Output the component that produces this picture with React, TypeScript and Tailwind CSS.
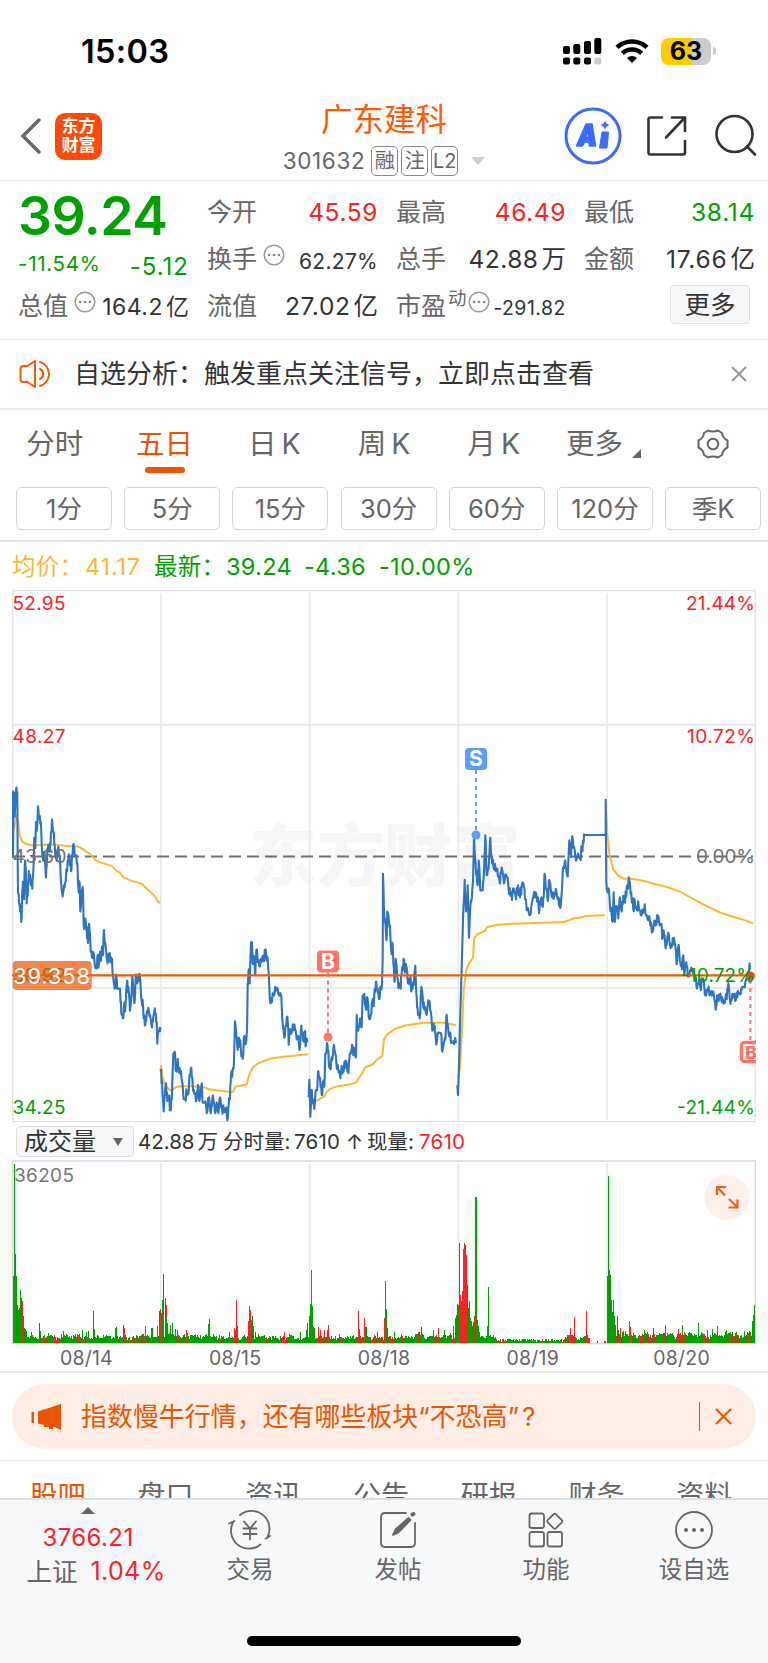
import { ReactNode } from 'react'

const PRICE_COLOR = '#2f74c0'
const AVG_COLOR = '#ffb733'
const UP = '#fa2323'
const DOWN = '#00a000'

// Traces are stored as sampled "x,y" pairs; toX / toY bring them to chart pixels
type Trace = { x0: number; price: string; avg: string }

const TRACES: Trace[] = [
  {
    x0: 0,
    price:
      '38,600 39,790 41,605 44,675 46,640 48,598 52,605 53,800 54,890 57,920 60,945 62,930 64,975 67,885 70,865 72,910 75,800 78,850 80,922 83,900 86,830 90,840 97,880 100,830 103,735 106,765 108,690 110,715 114,645 118,680 122,690 125,755 128,790 133,775 138,848 141,790 145,755 149,775 153,720 156,683 160,720 164,755 170,800 175,760 180,790 183,860 188,902 192,870 197,860 203,800 208,785 213,830 216,785 219,758 224,785 229,785 233,830 236,890 239,865 241,945 244,910 248,875 252,995 256,965 260,990 264,1035 267,980 270,1010 272,1060 276,1075 280,1065 284,1095 289,1108 292,1075 296,1100 300,1060 303,1085 306,1045 309,1070 312,998 316,1035 320,1080 324,1088 328,1070 332,1075 336,1080 339,1125 344,1165 349,1125 353,1165 360,1165 364,1235 369,1250 373,1205 376,1220 380,1155 385,1160 390,1228 395,1175 397,1130 401,1180 404,1200 408,1125 412,1150 415,1125 420,1130 425,1200 429,1215 431,1250 436,1268 440,1235 445,1220 450,1240 456,1275 460,1245 466,1235 470,1260 472,1322 475,1285 478,1285 481,1275',
    avg: '39,720 44,700 50,670 55,695 60,730 66,745 78,752 100,757 130,755 170,755 200,758 235,760 250,768 260,775 275,785 285,798 300,805 335,815 348,828 360,835 370,848 395,858 425,866 435,875 450,888 465,902 475,918 481,920',
  },
  {
    x0: 0,
    price:
      '482,1400 486,1430 491,1515 495,1465 498,1435 502,1485 506,1470 511,1510 515,1480 518,1400 520,1350 524,1345 528,1400 533,1365 537,1405 543,1400 546,1430 551,1480 556,1480 560,1460 565,1465 569,1410 574,1390 578,1440 583,1465 590,1480 594,1440 598,1485 603,1450 605,1435 608,1490 614,1490 620,1520 627,1475 632,1520 637,1480 642,1490 646,1520 650,1490 655,1520 660,1475 665,1500 672,1515 678,1505 682,1540 686,1500 690,1480 693,1410 698,1400 702,1370 705,1258 709,1300 713,1340 717,1305 722,1330 728,1365 733,1300 738,1320 741,1290 743,1150 746,1110 749,1150 752,1060 755,1032 759,1095 763,1085 766,1125 769,1055 773,1090 778,1100 783,1080 790,1085 796,1060 800,1085 803,1080 806,1120 809,1190 814,1205 820,1185 828,1170 835,1180 843,1185 846,1230 849,1275 853,1305 857,1270 862,1245 866,1325 870,1280 875,1290 880,1275 885,1280 890,1310 895,1300 899,1340 904,1270 908,1290 911,1310 914,1290 918,1325 922,1318',
    avg: '481,1400 484,1385 487,1415 495,1440 510,1455 520,1452 530,1445 570,1443 615,1447 625,1452 680,1458 688,1460 700,1458 706,1445 740,1438 748,1410 758,1390 775,1378 810,1365 850,1359 925,1352',
  },
  {
    x0: 900,
    price:
      '26,1475 28,1425 31,1530 34,1460 38,1480 43,1508 47,1455 51,1455 55,1400 60,1420 65,1468 70,1430 73,1445 76,1350 81,1320 85,1340 88,1385 92,1395 96,1370 100,1335 105,1345 109,1375 114,1392 119,1400 121,1420 125,1385 131,1400 136,1370 142,1400 146,1395 149,1350 153,1350 156,1325 160,1355 164,1340 168,1358 170,1240 175,1285 180,1250 185,1275 188,1185 193,1180 198,1225 202,1190 206,1245 212,1240 217,1200 221,1215 225,1165 229,1145 233,1165 237,1195 241,1160 246,1155 248,1080 249,838 253,960 257,990 260,1020 262,945 266,965 270,985 274,1060 278,1040 281,1100 284,1145 287,1080 292,1130 297,1160 302,1165 306,1105 311,1080 316,1115 320,1105 324,1150 330,1135 335,1165 341,1155 346,1100 350,1190 354,1240 359,1250 364,1160 368,1190 373,1225 380,1240 387,1200 392,1230 397,1285 401,1265 405,1290 409,1325 414,1290 423,1292 427,1345 431,1320 436,1310 440,1240 444,1275 450,1290 454,1320 460,1315 468,1320',
    avg: '28,1480 35,1495 50,1485 62,1478 73,1473 80,1460 90,1451 110,1444 150,1438 170,1432 176,1420 186,1408 195,1390 220,1380 230,1368 247,1357 252,1310 262,1295 285,1280 315,1270 370,1262 430,1262 468,1269',
  },
  {
    x0: 900,
    price:
      '472,1440 474,1468 480,1270 488,1000 494,855 498,945 503,870 507,1020 512,915 516,905 519,860 522,735 527,810 531,860 533,870 536,800 541,885 548,885 552,830 556,728 559,820 562,840 567,800 571,735 575,790 580,815 587,830 594,845 600,865 605,820 612,865 618,840 625,870 631,900 636,912 641,880 648,910 654,870 660,905 665,870 672,875 676,910 682,935 688,955 694,930 700,905 707,890 713,905 717,950 722,915 727,930 731,900 734,838 738,880 743,915 748,855 752,880 757,900 762,905 768,880 775,905 781,935 786,880 790,820 794,805 799,825 803,845 808,742 813,790 817,730 822,760 828,800 834,780 840,795 846,760 850,750 853,727 917,727',
    avg: '474,1420 480,1390 486,1280 491,1170 498,1115 506,1095 519,1077 523,1020 532,1010 556,1000 560,990 590,983 640,980 790,975 806,970 820,965 850,961 855,958 915,956',
  },
  {
    x0: 1680,
    price:
      '137,727 137,627 139,860 143,890 146,880 150,935 154,940 158,970 161,890 164,975 170,930 175,965 180,905 185,945 190,900 195,920 200,875 204,880 208,855 212,895 217,910 220,940 224,915 230,940 236,930 242,955 248,950 254,925 260,955 266,965 271,985 276,1005 281,980 287,985 292,955 297,975 303,985 308,1020 312,1010 317,1050 321,1030 325,1005 330,1040 336,1045 342,1020 347,1055 350,1095 356,1040 361,1090 366,1110 370,1070 373,1125 379,1090 383,1130 388,1130 394,1105 400,1125 406,1140 411,1165 417,1140 421,1160 427,1145 433,1160 438,1185 444,1170 450,1180 456,1185 462,1190 467,1225 471,1185 476,1200 481,1180 487,1190 492,1200 500,1195 505,1150 509,1190 515,1198 521,1190 526,1200 532,1190 535,1175 542,1180 547,1160 552,1160 558,1140 565,1120 570,1105',
    avg: '137,640 142,720 148,780 160,825 175,843 190,851 230,854 260,860 280,866 310,872 360,888 400,910 440,930 480,948 520,960 560,972 580,980',
  },
]

const toX = (v: number) => v / 3 - 12
const toY = (v: number) => v / 2.851 - 10

function noise(i: number) {
  const s = Math.sin(i * 12.9898) * 43758.5453
  return s - Math.floor(s)
}

function tracePath(src: string, x0: number, jitter = 0) {
  const pts = src.split(' ').map((p) => p.split(',').map(Number))
  const out: string[] = []
  pts.forEach(([x, y], i) => {
    out.push(`${toX(x + x0).toFixed(1)},${toY(y).toFixed(1)}`)
    const next = pts[i + 1]
    if (!jitter || !next || next[1] === y || next[0] - x < 3) return
    // tick noise between two samples
    for (const t of [0.35, 0.7]) {
      const n = (noise(x + x0 + t * 10) - 0.5) * jitter
      out.push(`${toX(x + x0 + (next[0] - x) * t).toFixed(1)},${toY(y + (next[1] - y) * t + n).toFixed(1)}`)
    }
  })
  return 'M' + out.join(' L')
}

// [x, height, r = up / g = down]
const SPIKES: [number, number, string][] = [
  [41, 200, 'r'], [43, 537, 'g'], [46, 267, 'r'], [48, 200, 'g'], [51, 115, 'g'], [54, 100, 'g'], [57, 105, 'g'], [60, 158, 'g'], [63, 135, 'g'], [67, 127, 'r'], [69, 80, 'g'], [72, 45, 'g'], [75, 42, 'g'], [78, 36, 'g'],
  [95, 32, 'r'], [117, 60, 'g'], [120, 36, 'g'], [189, 35, 'g'], [246, 40, 'g'], [258, 34, 'g'], [264, 36, 'g'], [279, 97, 'g'], [282, 42, 'g'], [345, 45, 'g'], [350, 48, 'g'], [370, 55, 'g'], [374, 44, 'r'], [435, 52, 'g'], [453, 45, 'g'], [458, 44, 'g'], [471, 50, 'r'], [477, 95, 'g'], [480, 103, 'r'], [483, 90, 'r'],
  [486, 130, 'g'], [489, 207, 'g'], [491, 188, 'g'], [495, 135, 'g'], [498, 115, 'r'], [500, 75, 'g'], [503, 60, 'g'], [512, 55, 'g'], [516, 60, 'g'], [525, 43, 'g'], [532, 40, 'g'], [558, 40, 'r'], [562, 30, 'r'], [625, 58, 'g'], [627, 73, 'r'], [687, 32, 'g'], [703, 45, 'r'], [707, 40, 'r'], [710, 130, 'r'], [713, 50, 'g'], [746, 65, 'r'], [749, 112, 'r'], [752, 100, 'r'], [755, 68, 'g'], [758, 80, 'g'], [761, 50, 'g'], [765, 32, 'g'],
  [854, 32, 'r'], [902, 34, 'g'], [919, 40, 'g'], [923, 60, 'g'], [927, 82, 'r'], [931, 118, 'g'], [934, 220, 'r'], [937, 112, 'g'], [940, 48, 'g'], [943, 44, 'g'], [956, 48, 'r'], [961, 40, 'r'], [973, 40, 'r'], [981, 38, 'g'], [986, 55, 'r'], [1018, 28, 'g'], [1076, 95, 'r'], [1078, 42, 'g'], [1094, 74, 'r'], [1097, 47, 'g'], [1100, 47, 'g'], [1131, 34, 'r'], [1153, 75, 'r'], [1155, 187, 'r'], [1158, 102, 'g'], [1161, 46, 'g'],
  [1184, 34, 'g'], [1204, 28, 'g'], [1256, 34, 'r'], [1259, 34, 'g'], [1263, 48, 'g'], [1301, 38, 'g'], [1314, 46, 'r'], [1332, 38, 'g'], [1352, 30, 'g'], [1360, 50, 'r'], [1366, 75, 'g'], [1370, 85, 'g'], [1373, 118, 'g'], [1376, 115, 'g'],
  [1379, 300, 'g'], [1382, 143, 'r'], [1385, 125, 'r'], [1387, 155, 'r'], [1390, 282, 'r'], [1392, 300, 'r'], [1395, 293, 'r'], [1398, 265, 'r'], [1401, 175, 'g'], [1403, 145, 'g'], [1406, 105, 'g'], [1408, 125, 'r'], [1411, 75, 'g'], [1415, 66, 'g'], [1418, 50, 'g'], [1421, 64, 'g'], [1424, 80, 'r'], [1426, 437, 'g'], [1429, 437, 'g'], [1432, 68, 'g'], [1435, 50, 'g'], [1438, 34, 'g'], [1462, 50, 'r'], [1464, 167, 'g'], [1480, 22, 'g'],
  [1697, 18, 'g'], [1701, 25, 'g'], [1711, 46, 'r'], [1714, 24, 'g'], [1722, 78, 'r'], [1758, 97, 'r'],
  [1822, 200, 'r'], [1824, 500, 'g'], [1827, 220, 'g'], [1830, 203, 'g'], [1832, 130, 'g'], [1835, 128, 'r'], [1837, 92, 'g'], [1840, 128, 'g'], [1843, 80, 'g'], [1846, 55, 'g'], [1851, 82, 'g'], [1854, 40, 'g'], [1862, 44, 'r'], [1866, 34, 'g'], [1870, 36, 'g'], [1876, 35, 'r'], [1887, 66, 'r'], [1891, 48, 'r'], [1934, 38, 'g'], [1960, 46, 'g'], [1996, 55, 'g'], [2016, 28, 'g'], [2034, 42, 'r'], [2047, 55, 'g'], [2068, 32, 'g'], [2096, 60, 'g'], [2122, 40, 'g'], [2136, 42, 'g'], [2152, 52, 'g'], [2179, 40, 'g'], [2208, 32, 'g'], [2234, 35, 'g'], [2247, 36, 'r'], [2256, 65, 'g'], [2260, 83, 'g'], [2263, 113, 'g'],
]

function VolumeBars() {
  const bars: ReactNode[] = []
  for (let x = 40; x < 2264; x += 2.6) {
    let h = 7 + noise(x) * 12 + noise(Math.floor(x / 14)) * 10
    let up = noise(x * 3) > 0.84
    if (x > 1486 && x < 1690) h = 4 + noise(x) * 9
    if (x > 1770 && x < 1820) {
      up = true
      h = noise(x) > 0.8 ? 7 : 1.5
    }
    if (x > 1840) h += 5
    bars.push(<rect key={x} x={toX(x - 1.5)} y={183 - h / 3} width={1} height={h / 3} fill={up ? UP : DOWN} />)
  }
  return (
    <g shapeRendering="crispEdges">
      {bars}
      {SPIKES.map(([x, h, c], i) => (
        <rect key={`s${i}`} x={toX(x - 1.5)} y={183 - h / 3} width={1} height={h / 3} fill={c === 'r' ? UP : DOWN} />
      ))}
    </g>
  )
}

function Marker({ x, y, dotY, label, color }: { x: number; y: number; dotY: number; label: string; color: string }) {
  const start = dotY > y ? y + 11 : y - 11
  return (
    <g>
      <path d={`M${x} ${start}V${dotY}`} stroke={color} strokeWidth="2" strokeDasharray="4 4" />
      <circle cx={x} cy={dotY} r="4.5" fill={color} />
      <rect x={x - 11} y={y - 11} width="22" height="22" rx="4" fill={color} />
      <text x={x} y={y + 7.3} textAnchor="middle" fontSize="21" fontWeight="700" fill="#fff">{label}</text>
    </g>
  )
}

const DAY_LINES = [148.8, 297.6, 446.4, 595]

function PriceChart() {
  return (
    <svg width="744" height="533" viewBox="0 0 744 533" className="block overflow-hidden">
      <text x="237" y="291" fontSize="68" fontWeight="900" fill="#f6f6f6" textLength="271">东方财富</text>
      <g stroke="#e6e9f0" strokeWidth="2" fill="none">
        {DAY_LINES.map((x) => <path key={x} d={`M${x} 3V530`} strokeWidth="1.6" />)}
        <path d="M1 134.8H743M1 398H743" />
        <path d="M0.7 0.7H743.3V531.5H0.7Z" strokeWidth="1.2" stroke="#dfe1e6" />
      </g>
      <path d="M1 266.4H741" stroke="#707070" strokeWidth="2" strokeDasharray="12 6" />
      <g fill="none" strokeWidth="2" strokeLinejoin="round">
        {TRACES.map((t, i) => <path key={i} d={tracePath(t.avg, t.x0)} stroke={AVG_COLOR} />)}
        {TRACES.map((t, i) => <path key={i} d={tracePath(t.price, t.x0, 34)} stroke={PRICE_COLOR} strokeWidth="2.1" />)}
      </g>
      <path d="M1 385.3H741" stroke="#f05a0a" strokeWidth="2.2" />
      <Marker x={316} y={371.5} dotY={447} label="B" color="#fd7567" />
      <Marker x={464} y={169} dotY={245} label="S" color="#5b9dff" />
      <g>
        <path d="M738.4 450V388" stroke="#fd7567" strokeWidth="2" strokeDasharray="4 4" />
        <circle cx="738.4" cy="386" r="4.5" fill="#e8472a" />
        <rect x="729.5" y="452.5" width="20" height="19" rx="3" fill="#fff" stroke="#fd7567" strokeWidth="3.5" />
        <text x="733" y="468.5" fontSize="18" fontWeight="800" fill="#fd7567">B</text>
      </g>
      <g fontSize="19">
        <text x="0.5" y="20" fill={UP} textLength="53">52.95</text>
        <text x="0.5" y="152.5" fill={UP} textLength="53">48.27</text>
        <text x="0.5" y="273" fill="#707070" textLength="54">43.60</text>
        <text x="0.5" y="524" fill={DOWN} textLength="53">34.25</text>
        <text x="743" y="20" fill={UP} textAnchor="end" textLength="69">21.44%</text>
        <text x="743" y="152.5" fill={UP} textAnchor="end" textLength="68">10.72%</text>
        <text x="743" y="273" fill="#707070" textAnchor="end" textLength="59">0.00%</text>
        <text x="743" y="392" fill={DOWN} textAnchor="end" textLength="75">-10.72%</text>
        <text x="743" y="524" fill={DOWN} textAnchor="end" textLength="78">-21.44%</text>
        <rect x="0.7" y="371" width="79" height="29" rx="4" fill="#f0864d" />
        <text x="0.5" y="392" fill="#a86a10" textLength="53">38.92</text>
        <path d="M0 385.3H80" stroke="#f0600f" strokeWidth="2" />
        <text x="1" y="394" fill="#fff" fontSize="22" textLength="77">39.358</text>
      </g>
    </svg>
  )
}

function VolumeChart() {
  return (
    <svg width="744" height="185" viewBox="0 0 744 185" className="block">
      <g stroke="#e6e9f0" strokeWidth="1.6" fill="none">
        {DAY_LINES.map((x) => <path key={x} d={`M${x} 3V183`} />)}
        <path d="M0.7 1H743.3V183.5H0.7Z" stroke="#d5d8de" strokeWidth="1.3" />
      </g>
      <VolumeBars />
      <text x="2" y="22" fontSize="19" fill="#777" textLength="60">36205</text>
      <circle cx="715" cy="37.5" r="22.5" fill="#fdf0ea" />
      <path d="M705 35V27H714M705.5 27.5L713 35.5M725.5 39.5V47.5H716.500M725 47L717 39" fill="none" stroke="#ee5f14" strokeWidth="2.2" />
    </svg>
  )
}

function StatusBar() {
  return (
    <div className="flex h-[95px] items-center justify-between pt-[7px] pr-[52px] pl-[81px]">
      <span className="pt-[2px] text-[32.5px] leading-none font-semibold tracking-[0.3px] text-black">15:03</span>
      <div className="flex items-center gap-[14px]">
        <svg width="40" height="28" viewBox="0 0 40 28">
          <g fill="#000">
            <rect x="1" y="9" width="7" height="8" rx="2" />
            <rect x="11.3" y="7" width="7" height="10" rx="2" />
            <rect x="22" y="4" width="7" height="13" rx="2" />
            <rect x="32.3" y="1" width="7" height="16" rx="2" />
            <rect x="1" y="20.5" width="7" height="7" rx="2" />
            <rect x="11.3" y="20.5" width="7" height="7" rx="2" />
            <rect x="22" y="20.5" width="7" height="7" rx="2" />
            <rect x="32.3" y="20.5" width="7" height="7" rx="2" fill="#ccc" />
          </g>
        </svg>
        <svg width="34" height="26" viewBox="0 0 34 26" className="-ml-px">
          <g fill="none" stroke="#000" strokeWidth="4.6">
            <path d="M2 9.4A22 22 0 0 1 32 9.4" />
            <path d="M7.3 15.4A14 14 0 0 1 26.7 15.4" />
          </g>
          <path d="M17 25L12 20A7.4 7.4 0 0 1 22 20Z" fill="#000" />
        </svg>
        <div className="-ml-0.5 flex items-center gap-[2px]">
          <div className="flex h-[27px] w-[50px] items-center justify-center rounded-[8px] bg-[linear-gradient(90deg,#ffcc00_63%,#cccccc_63%)] text-[25px] leading-none font-bold text-black">63</div>
          <div className="h-[8px] w-[3px] rounded-r-full bg-[#ccc]" />
        </div>
      </div>
    </div>
  )
}

function Tag({ children }: { children: ReactNode }) {
  return (
    <span className="flex h-[30px] w-[27px] items-center justify-center rounded-[5px] border-[1.5px] border-[#888] text-[20px] leading-none">{children}</span>
  )
}

function Header() {
  return (
    <header className="flex h-[86px] border-b border-[#ebebeb]">
      <div className="flex w-[240px] items-center gap-[14px] pb-[3px] pl-[20px]">
        <svg width="21" height="36" viewBox="0 0 21 36" fill="none" stroke="#666" strokeWidth="3.4" strokeLinecap="round">
          <path d="M19 2L3 18L19 34" />
        </svg>
        <div className="grid h-[47px] w-[47px] content-center justify-center rounded-[10px] bg-[#ff4a0a] text-[17px] leading-[19.5px] font-bold text-white">
          <span>东方</span>
          <span>财富</span>
        </div>
      </div>
      <div className="flex w-[288px] flex-col items-center">
        <h1 className="mt-[9px] text-[31.5px] leading-[32px] text-[#ff5a00]">广东建科</h1>
        <div className="mt-[10px] flex items-center gap-[3px] text-[#666]">
          <span className="mr-[3px] text-[22.5px] leading-none tracking-[0.6px]">301632</span>
          <Tag>融</Tag>
          <Tag>注</Tag>
          <Tag>L2</Tag>
          <svg width="14" height="8" viewBox="0 0 14 8" className="ml-[10px]"><path d="M0 0H14L7 8Z" fill="#ccc" /></svg>
        </div>
      </div>
      <div className="flex flex-1 items-center pb-[4px] pl-[36px]">
        <svg width="58" height="58" viewBox="0 0 58 58">
          <circle cx="29" cy="29" r="27" fill="none" stroke="#3b6cff" strokeWidth="3" />
          <path d="M22 17H28L31.5 39H25.5L25 35H20.5L18.5 39H12.5ZM24 23L21.5 30.5H24.7Z" fill="#3b6cff" stroke="#3b6cff" strokeWidth="1.6" strokeLinejoin="round" fillRule="evenodd" />
          <path d="M38 25H44.5L43 41H35.5Z" fill="#3b6cff" stroke="#3b6cff" strokeWidth="1" strokeLinejoin="round" />
          <path d="M41 13.5Q42 17 45.5 18Q42 19 41 22.5Q40 19 36.5 18Q40 17 41 13.5Z" fill="#3b6cff" />
        </svg>
        <svg width="42" height="42" viewBox="0 0 42 42" className="ml-[24px]" fill="none" stroke="#333" strokeWidth="2.6" strokeLinecap="round" strokeLinejoin="round">
          <path d="M16 2.5H4.5Q2.5 2.5 2.5 4.5V37.5Q2.5 39.5 4.5 39.5H37Q39 39.5 39 37.5V26" />
          <path d="M26 2.5H39V16M39 2.5L20 22.5" />
        </svg>
        <svg width="44" height="44" viewBox="0 0 44 44" className="ml-[26px]" fill="none" stroke="#333" strokeWidth="2.6" strokeLinecap="round">
          <circle cx="20.5" cy="20" r="18" />
          <path d="M33 32.5L41 40.5" />
        </svg>
      </div>
    </header>
  )
}

function InfoDot() {
  return (
    <svg width="22" height="22" viewBox="0 0 22 22">
      <circle cx="11" cy="11" r="9.8" fill="none" stroke="#999" strokeWidth="1.5" />
      <g fill="#888">
        <circle cx="6" cy="11" r="1.3" />
        <circle cx="11" cy="11" r="1.3" />
        <circle cx="16" cy="11" r="1.3" />
      </g>
    </svg>
  )
}

function Cell({ label, children }: { label: ReactNode; children: ReactNode }) {
  return (
    <div className="flex h-[47px] items-center justify-between leading-none whitespace-nowrap">
      <span className="flex items-center text-[25px]">{label}</span>
      {children}
    </div>
  )
}

function Unit({ children }: { children: ReactNode }) {
  return <span className="ml-[3px] tracking-normal">{children}</span>
}

function Quote() {
  return (
    <section className="grid h-[159px] grid-cols-[171px_171px_170px_171px] gap-x-[18px] border-b border-[#e8e8e8] pt-[8px] pl-[18px] text-[24.5px] text-[#666]">
      <div>
        <div className="h-[51px] text-[53.5px] leading-[54px] font-semibold tracking-[-0.5px] text-[#00a000]">39.24</div>
        <div className="flex h-[43px] items-center justify-between pt-[6px] leading-none text-[#00a000]">
          <span className="text-[20.5px] tracking-[0.7px]">-11.54%</span>
          <span className="pt-1 text-[24px] tracking-[1px]">-5.12</span>
        </div>
        <Cell label={<>总值<span className="mb-[10px] ml-[6px]"><InfoDot /></span></>}>
          <span className="pt-[2px] text-[23px] tracking-[0.5px] text-[#333]">164.2<Unit>亿</Unit></span>
        </Cell>
      </div>
      <div>
        <Cell label="今开"><span className="tracking-[0.6px] text-[#fa2323]">45.59</span></Cell>
        <Cell label={<>换手<span className="mb-[10px] ml-[6px]"><InfoDot /></span></>}>
          <span className="pt-1 text-[21px] tracking-[0.3px] text-[#333]">62.27%</span>
        </Cell>
        <Cell label="流值"><span className="tracking-[0.6px] text-[#333]">27.02<Unit>亿</Unit></span></Cell>
      </div>
      <div>
        <Cell label="最高"><span className="tracking-[0.6px] text-[#fa2323]">46.49</span></Cell>
        <Cell label="总手"><span className="tracking-[0.5px] text-[#333]">42.88<Unit>万</Unit></span></Cell>
        <Cell label={<>市盈<span className="mb-[16px] ml-[2px] text-[18.5px]">动</span><span className="mb-[10px] ml-px"><InfoDot /></span></>}>
          <span className="pt-[5px] text-[19.5px] tracking-[0.5px] text-[#333]">-291.82</span>
        </Cell>
      </div>
      <div>
        <Cell label="最低"><span className="tracking-[0.7px] text-[#00a000]">38.14</span></Cell>
        <Cell label="金额"><span className="tracking-[0.8px] text-[#333]">17.66<Unit>亿</Unit></span></Cell>
        <div className="flex justify-end pt-[2px] pr-[5px]">
          <button className="flex h-[39px] w-[80px] items-center justify-center rounded-[4px] border border-[#dcdfe6] bg-[#f7f8fa] text-[25.5px] leading-none text-[#333]">更多</button>
        </div>
      </div>
    </section>
  )
}

function Notice() {
  return (
    <section className="flex h-[70px] items-center border-b-2 border-[#eee] pr-[21px] pl-[19px]">
      <svg width="34" height="30" viewBox="0 0 34 30" fill="none" stroke="#f05a0a" strokeWidth="2" strokeLinejoin="round" strokeLinecap="round">
        <path d="M16 2L8.5 7H4.5Q1.5 7 1.5 10V20Q1.5 23 4.5 23H8.5L16 28Z" />
        <path d="M21 10A5.5 5.5 0 0 1 21 20M21 3A12.5 12.5 0 0 1 21 27" />
      </svg>
      <p className="ml-[21px] flex-1 text-[26px] leading-none whitespace-nowrap text-[#333]">自选分析：触发重点关注信号，立即点击查看</p>
      <svg width="16" height="16" viewBox="0 0 16 16" stroke="#999" strokeWidth="2"><path d="M1 1L15 15M15 1L1 15" /></svg>
    </section>
  )
}

function PeriodTabs() {
  return (
    <nav>
      <div className="grid h-[77px] grid-cols-7 pt-[19px] text-center text-[28.5px] leading-[30px] [word-spacing:-3px] text-[#666]">
        <span>分时</span>
        <span className="flex flex-col items-center text-[#ea5504]">
          五日
          <i className="mt-[8px] h-[6px] w-[40px] rounded-full bg-[#ea5504]" />
        </span>
        <span>日 K</span>
        <span>周 K</span>
        <span>月 K</span>
        <span className="flex justify-center">
          更多
          <svg width="9" height="9" viewBox="0 0 9 9" className="mt-[20px] ml-[9px]"><path d="M9 0V9H0Z" fill="#666" /></svg>
        </span>
        <span className="flex justify-center">
          <svg width="34" height="32" viewBox="0 0 34 32" className="-mt-px" fill="none" stroke="#666" strokeWidth="2" strokeLinejoin="round">
            <path d="M12 2.5Q17 4.5 22 2.5L26 5Q26.5 10 31.5 12.5V19.5Q26.5 22 26 27L22 29.5Q17 27.5 12 29.5L8 27Q7.5 22 2.5 19.5V12.5Q7.5 10 8 5Z" />
            <circle cx="17" cy="16" r="5.3" />
          </svg>
        </span>
      </div>
      <div className="flex h-[55px] gap-[12.2px] border-b-2 border-[#e2e3ea] pl-[16px]">
        {['1分', '5分', '15分', '30分', '60分', '120分', '季K'].map((p) => (
          <span key={p} className="flex h-[43px] w-[96px] shrink-0 items-center justify-center rounded-[5px] border border-[#d4d4d4] text-[25.5px] leading-none text-[#666]">{p}</span>
        ))}
      </div>
    </nav>
  )
}

function Legend() {
  return (
    <div className="flex h-[48px] items-center pt-px pl-[12px] text-[23.5px] leading-none tracking-[0.3px] whitespace-nowrap text-[#00a000]">
      <span className="w-[73px] text-[#ffb733]">均价：</span>
      <span className="w-[69px] tracking-[0.8px] text-[#ffb733]">41.17</span>
      <span className="w-[72px]">最新：</span>
      <span className="w-[78px]">39.24</span>
      <span className="w-[75px]">-4.36</span>
      <span>-10.00%</span>
    </div>
  )
}

function VolumeHeader() {
  return (
    <div className="flex h-[37px] items-center pl-[4px] text-[20.5px] leading-none whitespace-pre text-[#333]">
      <div className="mr-[4px] flex h-[31px] w-[118px] items-center justify-between rounded-[4px] border border-[#dcdfe6] bg-[#f7f8fa] pr-[10px] pl-[7px] text-[24px]">
        成交量
        <svg width="10" height="8" viewBox="0 0 10 8"><path d="M0 0H10L5 8Z" fill="#666" /></svg>
      </div>
      <div className="flex pt-[2px]">
        <span className="w-[85px]">42.88<Unit>万</Unit></span>
        <span className="w-[71px]">分时量:</span>
        <span className="w-[52px] tracking-[0.2px]">7610</span>
        <span className="w-[21px]">↑</span>
        <span className="w-[52px]">现量:</span>
        <span className="tracking-[0.2px] text-[#fa2323]">7610</span>
      </div>
    </div>
  )
}

function Banner() {
  return (
    <section className="border-y border-t-2 border-[#e8e8ec] px-[12px] pt-[11px] pb-[11px]">
      <div className="flex h-[65px] items-center rounded-full bg-[#fdede5] pr-[24px] pl-[19px] text-[#ea5504]">
        <svg width="31" height="28" viewBox="0 0 31 28" fill="#ea5504">
          <path d="M30 1V27L22 23.5V26H18V24H13V22L7 20.5V8.5Z" />
          <path d="M0.5 9H3V20H0.5Z" />
        </svg>
        <p className="ml-[19px] flex-1 text-[25.8px] leading-none tracking-[0.15px] whitespace-nowrap">
          指数慢牛行情，还有哪些板块“不恐高”<span className="ml-[3px]">?</span>
        </p>
        <i className="mr-[15px] h-[29px] w-[1.5px] bg-[#ea5504]" />
        <svg width="17" height="17" viewBox="0 0 17 17" stroke="#ea5504" strokeWidth="2"><path d="M1 1L16 16M16 1L1 16" /></svg>
      </div>
    </section>
  )
}

const DETAIL_TABS = ['股吧', '盘口', '资讯', '公告', '研报', '财务', '资料']

function ToolItem({ label, children }: { label: string; children: ReactNode }) {
  return (
    <div className="flex w-[148px] flex-col items-center pt-[9px]">
      <svg width="44" height="42" viewBox="-22 -21 44 42" fill="none" stroke="#666" strokeWidth="1.8" strokeLinecap="round" strokeLinejoin="round">
        {children}
      </svg>
      <span className="mt-[6px] text-[23.5px] leading-[25px]">{label}</span>
    </div>
  )
}

function BottomBar() {
  return (
    <footer className="h-[165px] border-t-2 border-[#dcdfe5] bg-[#f7f8fa]">
      <div className="flex h-[128px] text-[#666]">
        <div className="flex w-[176px] flex-col items-center pt-[7px] text-[24px] leading-none">
          <svg width="14" height="7" viewBox="0 0 14 7"><path d="M0 7L7 0L14 7Z" fill="#666" /></svg>
          <span className="mt-[12px] text-[24px] tracking-[0.4px] text-[#fa2323]">3766.21</span>
          <div className="mt-[9px] flex items-center gap-[13px] pl-[16px]">
            <span className="text-[25.5px]">上证</span>
            <span className="text-[25px] tracking-[0.4px] text-[#fa2323]">1.04%</span>
          </div>
        </div>
        <ToolItem label="交易">
          <path d="M-10 -15A18 18 0 0 1 17 8L20 6M17 8L15.5 8.5M10.5 14.5A18 18 0 0 1 -16.5 -8.5L-21 -6.5M-16.5 -8.5L-15.5 -9" />
          <path d="M-6 -8.5L0 -1.5L6 -8.5M0 -1.5V9.5M-6.5 -1.5H6.5M-6.5 4H6.5" />
        </ToolItem>
        <ToolItem label="发帖">
          <path d="M8 -17H-13Q-17 -17 -17 -13V13Q-17 17 -13 17H13Q17 17 17 13V-7" />
          <path d="M-5 5L-2.5 -0.5L10.5 -12L12.5 -10L0.5 2.5Z" fill="#666" />
          <path d="M14.5 -15.5L15.5 -16" strokeWidth="4" />
        </ToolItem>
        <ToolItem label="功能">
          <rect x="-16.5" y="-16.5" width="14.5" height="14.5" rx="2" />
          <rect x="-16.5" y="2" width="14.5" height="14.5" rx="2" />
          <rect x="1.5" y="2" width="14.5" height="14.5" rx="2" />
          <rect x="3" y="-14.5" width="11.5" height="11.5" rx="1.5" transform="rotate(45 8.75 -8.75)" />
        </ToolItem>
        <ToolItem label="设自选">
          <circle r="18" />
          <g fill="#666" stroke="none">
            <circle cx="-8" r="2" />
            <circle r="2" />
            <circle cx="8" r="2" />
          </g>
        </ToolItem>
      </div>
      <div className="mx-auto mt-[8px] h-[10px] w-[274px] rounded-full bg-black" />
    </footer>
  )
}

export default function App() {
  return (
    <main className="flex h-[1663px] w-[768px] flex-col overflow-hidden bg-white font-['Inter','Noto_Sans_CJK_SC',sans-serif]">
      <StatusBar />
      <Header />
      <Quote />
      <Notice />
      <PeriodTabs />
      <Legend />

      <div className="pl-[12px]">
        <PriceChart />
        <VolumeHeader />
        <VolumeChart />
        <div className="grid h-[26px] w-[744px] grid-cols-5 text-center text-[19.5px] leading-[27px] tracking-[0.2px] text-[#666]">
          {['08/14', '08/15', '08/18', '08/19', '08/20'].map((d) => <span key={d}>{d}</span>)}
        </div>
      </div>

      <Banner />

      <div className="grid min-h-0 flex-1 grid-cols-7 overflow-hidden pt-[20px] pr-[10px] pl-[4px] text-center text-[28px] leading-[30px] text-[#666]">
        {DETAIL_TABS.map((t, i) => (
          <span key={t} className={i === 0 ? 'text-[#ea5504]' : ''}>{t}</span>
        ))}
      </div>
      <BottomBar />
    </main>
  )
}
